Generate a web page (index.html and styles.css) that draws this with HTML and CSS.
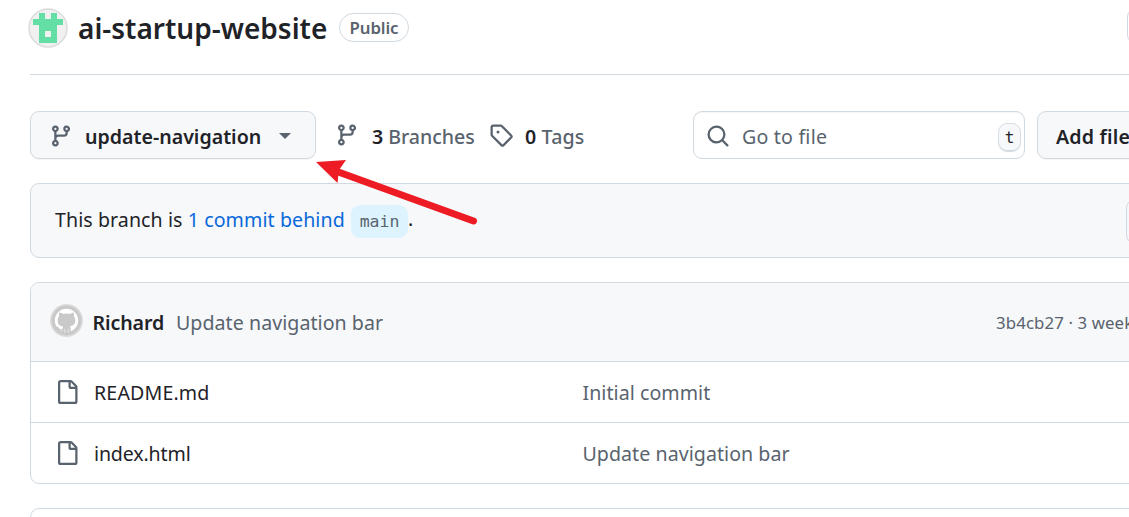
FILE: index.html
```
<!DOCTYPE html>
<html lang="en">
<head>
<meta charset="utf-8">
<title>ai-startup-website</title>
<link rel="stylesheet" href="styles.css">
</head>
<body>
<svg class="defs" aria-hidden="true">
  <symbol id="branch" viewBox="0 0 16 16"><path d="M9.5 3.25a2.25 2.25 0 1 1 3 2.122V6A2.5 2.5 0 0 1 10 8.5H6a1 1 0 0 0-1 1v1.128a2.251 2.251 0 1 1-1.5 0V5.372a2.25 2.25 0 1 1 1.5 0v1.836A2.493 2.493 0 0 1 6 7h4a1 1 0 0 0 1-1v-.628A2.25 2.25 0 0 1 9.5 3.25Zm-6 0a.75.75 0 1 0 1.5 0 .75.75 0 0 0-1.5 0Zm8.25-.75a.75.75 0 1 0 0 1.5.75.75 0 0 0 0-1.5ZM4.25 12a.75.75 0 1 0 0 1.5.75.75 0 0 0 0-1.5Z"/></symbol>
  <symbol id="file" viewBox="0 0 16 16"><path d="M2 1.75C2 .784 2.784 0 3.75 0h6.586c.464 0 .909.184 1.237.513l2.914 2.914c.329.328.513.773.513 1.237v9.586A1.75 1.75 0 0 1 13.25 16h-9.5A1.75 1.75 0 0 1 2 14.25Zm1.75-.25a.25.25 0 0 0-.25.25v12.5c0 .138.112.25.25.25h9.5a.25.25 0 0 0 .25-.25V6h-2.75A1.75 1.75 0 0 1 9 4.25V1.5Zm6.75.062V4.25c0 .138.112.25.25.25h2.688l-.011-.013-2.914-2.914-.013-.011Z"/></symbol>
</svg>
<div class="page">
  <header class="repo-header">
    <svg class="avatar" viewBox="0 0 40 40"><circle cx="20" cy="20" r="19" fill="#f0f0f0" stroke="#dcdcdc" stroke-width="1.5"/><path fill="#63dfa5" fill-rule="evenodd" d="M11 5h6v6h6V5h6v6h6v6h-6v18H11V17H5v-6h6zM17 23v6h6v-6z"/></svg>
    <h1 class="repo-name">ai-startup-website</h1>
    <span class="label">Public</span>
    <span class="header-action"></span>
  </header>
  <div class="toolbar">
    <div class="button branch-picker"><svg class="icon"><use href="#branch"/></svg><span class="branch-name">update-navigation</span><span class="caret"></span></div>
    <a class="stat branches"><svg class="icon"><use href="#branch"/></svg><span><b>3</b> Branches</span></a>
    <a class="stat tags"><svg class="icon" viewBox="0 0 16 16"><path d="M1 7.775V2.75C1 1.784 1.784 1 2.75 1h5.025c.464 0 .91.184 1.238.513l6.25 6.25a1.75 1.75 0 0 1 0 2.474l-5.026 5.026a1.75 1.75 0 0 1-2.474 0l-6.25-6.25A1.752 1.752 0 0 1 1 7.775Zm1.5 0c0 .066.026.13.073.177l6.25 6.25a.25.25 0 0 0 .354 0l5.025-5.025a.25.25 0 0 0 0-.354l-6.25-6.25a.25.25 0 0 0-.177-.073H2.75a.25.25 0 0 0-.25.25ZM6 5a1 1 0 1 1 0 2 1 1 0 0 1 0-2Z"/></svg><span><b>0</b> Tags</span></a>
    <div class="search"><svg class="icon" viewBox="0 0 16 16"><path d="M10.68 11.74a6 6 0 0 1-7.922-8.982 6 6 0 0 1 8.982 7.922l3.04 3.04a.749.749 0 0 1-.326 1.275.749.749 0 0 1-.734-.215ZM11.5 7a4.499 4.499 0 1 0-8.997 0A4.499 4.499 0 0 0 11.5 7Z"/></svg><span class="placeholder">Go to file</span><kbd>t</kbd></div>
    <div class="button add-file">Add file</div>
  </div>
  <section class="notice">
    <p><span class="notice-text">This branch is <a>1 commit behind</a></span><code>main</code>.</p>
    <span class="notice-action"></span>
  </section>
  <section class="files">
    <div class="commit">
      <svg class="user" viewBox="0 0 32 32"><circle cx="16" cy="16" r="16" fill="#dcdcdc"/><circle cx="16" cy="16" r="14.5" fill="#c9c9c9"/><circle cx="16" cy="16" r="11.3" fill="#fff"/><path fill="#c9c9c9" d="M9 8.2c1.500 0 2.900.8 3.800 1.500a14 14 0 0 1 6.400 0c.900-.7 2.300-1.500 3.800-1.500.5 1.400.4 2.700.1 3.500 1 1.200 1.500 2.500 1.500 4.100 0 4-2.500 5.400-5.400 5.900.7.700.9 1.500.9 2.500v3.900h-8v-2.500c-3 .5-4-.6-4.700-1.900-.4-.8-.8-1.300-1.500-1.700.9-.4 1.900.1 2.600 1.100.9 1.400 2 1.700 3.500 1.300.1-1.100.4-2 .8-2.500-3-.5-5.400-2-5.400-6 0-1.600.6-3 1.500-4.200-.3-.9-.4-2.200.1-3.500z"/><path stroke="#fff" stroke-width=".5" d="M14.300 24v4M17.700 24v4"/></svg>
      <span class="author">Richard</span>
      <span class="message">Update navigation bar</span>
      <span class="meta">3b4cb27 · 3 weeks ago</span>
    </div>
    <div class="row"><svg class="icon"><use href="#file"/></svg><span class="filename readme">README.md</span><span class="message">Initial commit</span></div>
    <div class="row"><svg class="icon"><use href="#file"/></svg><span class="filename index">index.html</span><span class="message">Update navigation bar</span></div>
  </section>
  <section class="readme-box"></section>
</div>
<svg class="arrow" viewBox="0 0 170 70"><path d="M22 14.500 158.500 64" fill="none" stroke="#ed1c24" stroke-width="7" stroke-linecap="round"/><path fill="#ed1c24" d="M1 5 31 3 24 13 22.500 26z"/></svg>
</body>
</html>
```
FILE: styles.css
```
* { box-sizing: border-box; }
html, body { margin: 0; height: 517px; overflow: hidden; background: #fff; }
body { position: relative; font: 19.6px/30px "Noto Sans", "Open Sans", sans-serif; color: #1f2328; }
.defs { display: none; }
.page { width: 100%; padding-left: 30px; height: 517px; overflow: hidden; }
.icon { width: 24px; height: 24px; fill: #59636e; flex: none; display: block; }
.repo-header { height: 75px; width: 1210px; border-bottom: 1px solid #d1d9e0; display: flex; align-items: flex-start; }
.avatar { width: 40px; height: 40px; margin: 8px 0 0 -2px; flex: none; }
.repo-name { margin: 9px 0 0 10px; width: 261px; font-size: 28px; line-height: 38px; font-weight: 600; white-space: nowrap; flex: none; }
.label { margin-top: 13px; width: 70px; height: 29px; border: 1px solid #d1d9e0; border-radius: 15px; text-align: center; font-size: 16.800px; line-height: 27px; font-weight: 600; letter-spacing: -.1px; color: #59636e; flex: none; }
.header-action { width: 70px; height: 36px; margin: 8px 0 0 718px; border: 1px solid #d1d9e0; border-radius: 9px; flex: none; }
.toolbar { margin-top: 36px; height: 48px; width: 1210px; display: flex; align-items: center; white-space: nowrap; }
.button { height: 48px; border: 1px solid #d1d9e0; border-radius: 9px; background: #f6f8fa; display: flex; align-items: center; font-weight: 600; box-shadow: 0 1px 1px rgba(31, 35, 40, .04); flex: none; }
.branch-picker { width: 286px; padding: 3px 0 0 18px; }
.branch-picker .icon { margin-top: -1px; }
.branch-name { margin-left: 12px; width: 194px; }
.caret { border: 6.500px solid transparent; border-top-color: #59636e; border-bottom: 0; margin-top: -2px; }
.stat { display: flex; align-items: center; color: #59636e; flex: none; font-weight: 500; padding-top: 3px; }
.stat .icon { margin-top: -4px; }
.stat b { font-weight: 600; color: #1f2328; }
.branches { width: 154px; margin-left: 19px; letter-spacing: -.05px; }
.branches span { margin-left: 13px; }
.tags { width: 204px; letter-spacing: .15px; }
.tags span { margin-left: 12px; }
.search { width: 332px; height: 48px; border: 1px solid #d1d9e0; border-radius: 9px; display: flex; align-items: center; padding: 2px 3px 0 12px; box-shadow: inset 0 1px 1px rgba(31, 35, 40, .04); flex: none; }
.placeholder { color: #59636e; margin-left: 12px; padding-top: 2px; letter-spacing: .2px; flex: 1; }
kbd { width: 23px; height: 29px; margin-top: 2px; border: 1px solid #d8dee4; border-radius: 9px; background: #f6f8fa; box-shadow: inset 0 -1px 0 #d1d9e0; text-align: center; font: 16px/27px "DejaVu Sans Mono", monospace; }
.add-file { width: 140px; margin-left: 12px; padding: 3px 0 0 18px; letter-spacing: .2px; }
.notice { margin-top: 24px; height: 75px; width: 1210px; border: 1px solid #d1d9e0; border-radius: 9px; background: #f6f8fa; display: flex; padding: 15px 0 0 24px; }
.notice p { margin: 5px 0 0; width: 1071px; display: flex; flex: none; white-space: nowrap; }
.notice-text { width: 296px; padding-top: 1px; letter-spacing: .08px; }
.notice a { color: #0969da; }
code { width: 57px; height: 33px; margin-top: 1px; border-radius: 9px; background: #ddf4ff; color: #59636e; text-align: center; font: 16.500px/33px "DejaVu Sans Mono", monospace; }
.notice-action { width: 90px; height: 45px; border: 1px solid #d1d9e0; border-radius: 9px; flex: none; }
.files { margin-top: 24px; height: 202px; width: 1210px; border: 1px solid #d1d9e0; border-radius: 9px; overflow: hidden; }
.commit { height: 78px; background: #f6f8fa; display: flex; align-items: center; padding: 1px 0 0 18.500px; white-space: nowrap; }
.user { width: 33px; height: 33px; flex: none; margin-top: -4px; }
.author { font-weight: 600; margin-left: 10px; width: 83.500px; letter-spacing: -.1px; }
.message { color: #59636e; letter-spacing: .05px; }
.commit .message { width: 820px; }
.meta { color: #59636e; font-size: 16.800px; letter-spacing: .12px; }
.row { height: 61px; border-top: 1px solid #d1d9e0; padding: 2px 0 0 24px; display: flex; align-items: center; white-space: nowrap; }
.row .icon { margin-top: -2px; }
.filename { margin-left: 15px; width: 488.500px; }
.readme { letter-spacing: .15px; }
.index { letter-spacing: -.15px; }
.readme-box { margin-top: 24px; height: 60px; width: 1210px; border: 1px solid #d1d9e0; border-radius: 9px; }
.arrow { position: absolute; left: 315px; top: 157px; width: 170px; height: 70px; }
```
